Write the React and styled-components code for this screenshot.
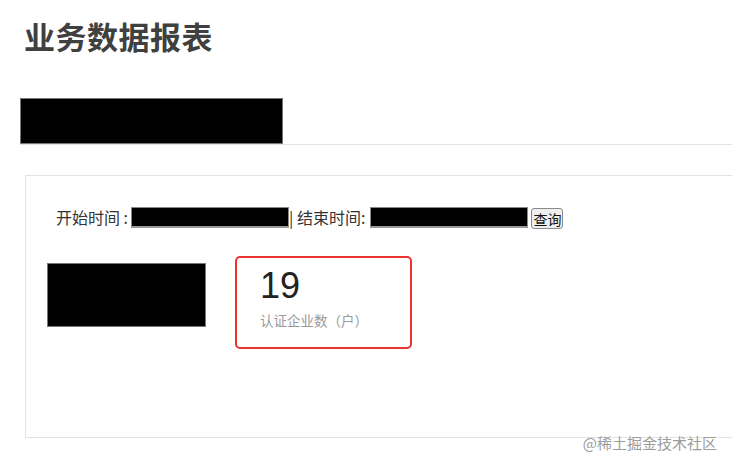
import React from 'react';
import styled, { createGlobalStyle } from 'styled-components';

const GlobalStyle = createGlobalStyle`
  html, body {
    margin: 0;
    padding: 0;
    background: #ffffff;
    overflow: hidden;
  }
  body {
    font-family: "Noto Sans CJK SC", "Noto Sans", "Liberation Sans", sans-serif;
    color: #333;
  }
`;

const Page = styled.div`
  position: relative;
  width: 732px;
  height: 469px;
  padding-left: 20px;
  box-sizing: border-box;
  overflow: hidden;
`;

const Title = styled.h1`
  margin: 16px 0 0 4px;
  font-size: 31px;
  line-height: 40px;
  font-weight: 700;
  color: #404040;
  letter-spacing: 0.5px;
`;

const TabBar = styled.div`
  display: flex;
  margin-top: 42px;
  border-bottom: 1px solid #e4e4e4;
`;

const Redacted = styled.div`
  width: ${(p) => p.$w}px;
  height: ${(p) => p.$h}px;
  background: #000;
  border: 1px solid #777;
  box-sizing: border-box;
  flex-shrink: 0;
`;

const Panel = styled.div`
  margin: 30px 0 0 5px;
  width: 760px;
  height: 263px;
  border: 1px solid #e3e3e3;
  box-sizing: border-box;
  padding: 30px 0 0 21px;
`;

const FilterRow = styled.div`
  display: flex;
  align-items: center;
  padding-left: 9px;
  font-size: 16px;
  color: #333;
  height: 22px;
`;

const Label = styled.span`
  white-space: nowrap;
  margin-right: ${(p) => p.$gap ?? 3}px;
`;

const DateInput = styled.div`
  width: 158px;
  height: 21px;
  background: #000;
  border: 1px solid #888;
  border-bottom: 2px solid #999;
  box-sizing: border-box;
`;

const Button = styled.button`
  margin-left: 3px;
  margin-top: 3px;
  height: 21px;
  padding: 0 1px;
  font-family: inherit;
  font-size: 14px;
  line-height: 18px;
  color: #111;
  background: #efefef;
  border: 1px solid #8a8a8a;
  border-radius: 3px;
`;

const StatsRow = styled.div`
  display: flex;
  align-items: flex-start;
  gap: 29px;
  margin-top: 28px;
`;

const BlockWrap = styled.div`
  margin-top: 7px;
`;

const StatCard = styled.div`
  width: 177px;
  height: 93px;
  box-sizing: border-box;
  border: 2px solid #e8332f;
  border-radius: 5px;
  padding: 8px 0 0 23px;
`;

const StatValue = styled.div`
  font-family: "Liberation Sans", "Noto Sans", sans-serif;
  font-size: 36px;
  line-height: 40px;
  color: #222;
`;

const StatLabel = styled.div`
  margin-top: 5px;
  font-size: 13.5px;
  line-height: 18px;
  color: #9a9a9a;
`;

const Watermark = styled.div`
  position: absolute;
  right: 15px;
  bottom: 17px;
  font-size: 15px;
  line-height: 18px;
  color: #9c9c9c;
`;

export default function App() {
  return (
    <>
      <GlobalStyle />
      <Page>
        <Title>业务数据报表</Title>
        <TabBar>
          <Redacted $w={263} $h={46} />
        </TabBar>
        <Panel>
          <FilterRow>
            <Label>开始时间 :</Label>
            <DateInput />
            <Label $gap={5}>| 结束时间:</Label>
            <DateInput />
            <Button>查询</Button>
          </FilterRow>
          <StatsRow>
            <BlockWrap>
              <Redacted $w={159} $h={64} />
            </BlockWrap>
            <StatCard>
              <StatValue>19</StatValue>
              <StatLabel>认证企业数（户）</StatLabel>
            </StatCard>
          </StatsRow>
        </Panel>
        <Watermark>@稀土掘金技术社区</Watermark>
      </Page>
    </>
  );
}
